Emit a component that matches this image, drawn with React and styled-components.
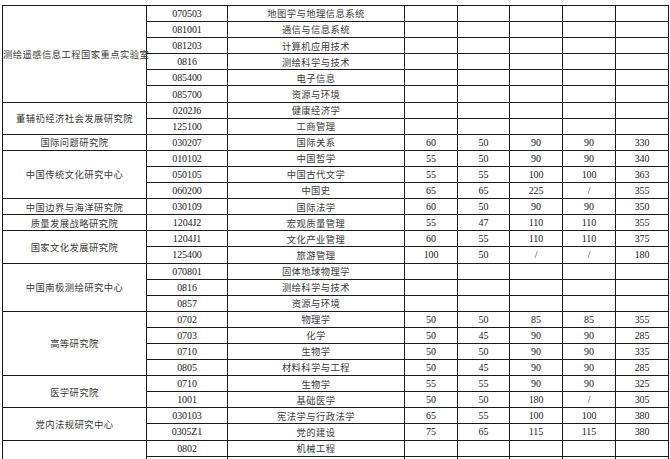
import React from "react";
import styled, { createGlobalStyle } from "styled-components";

const GlobalStyle = createGlobalStyle`
  html, body {
    margin: 0;
    padding: 0;
    overflow: hidden;
    background: #fff;
  }
`;

const Sheet = styled.table`
  margin: 5px 0 0 2px;
  width: 666px;
  border-collapse: collapse;
  table-layout: fixed;
  font-family: "Liberation Serif", "Noto Sans CJK SC", serif;
  font-size: 9.5px;
  color: #333;
`;

const Row = styled.tr`
  height: 16.1px;
`;

const Cell = styled.td`
  border: 1px solid #1a1a1a;
  padding: 1px 0 0;
  text-align: center;
  vertical-align: middle;
  white-space: nowrap;
  line-height: 1;
  font-size: ${(p) => (p.$cjk ? "9.3px" : "10px")};
  letter-spacing: ${(p) => (p.$cjk ? "0.45px" : "-0.1px")};
  font-family: ${(p) =>
    p.$cjk
      ? '"Noto Sans CJK SC", "Liberation Serif", sans-serif'
      : '"Liberation Serif", "Noto Sans CJK SC", serif'};
  color: ${(p) => (p.$cjk ? "#3a3a3a" : "#222")};
`;

const widths = [144, 81, 177, 53, 52, 53, 53, 53];

const groups = [
  {
    name: "测绘遥感信息工程国家重点实验室",
    rows: [
      ["070503", "地图学与地理信息系统"],
      ["081001", "通信与信息系统"],
      ["081203", "计算机应用技术"],
      ["0816", "测绘科学与技术"],
      ["085400", "电子信息"],
      ["085700", "资源与环境"],
    ],
  },
  {
    name: "董辅礽经济社会发展研究院",
    rows: [
      ["0202J6", "健康经济学"],
      ["125100", "工商管理"],
    ],
  },
  {
    name: "国际问题研究院",
    rows: [["030207", "国际关系", 60, 50, 90, 90, 330]],
  },
  {
    name: "中国传统文化研究中心",
    rows: [
      ["010102", "中国哲学", 55, 50, 90, 90, 340],
      ["050105", "中国古代文学", 55, 55, 100, 100, 363],
      ["060200", "中国史", 65, 65, 225, "/", 355],
    ],
  },
  {
    name: "中国边界与海洋研究院",
    rows: [["030109", "国际法学", 60, 50, 90, 90, 350]],
  },
  {
    name: "质量发展战略研究院",
    rows: [["1204J2", "宏观质量管理", 55, 47, 110, 110, 355]],
  },
  {
    name: "国家文化发展研究院",
    rows: [
      ["1204J1", "文化产业管理", 60, 55, 110, 110, 375],
      ["125400", "旅游管理", 100, 50, "/", "/", 180],
    ],
  },
  {
    name: "中国南极测绘研究中心",
    rows: [
      ["070801", "固体地球物理学"],
      ["0816", "测绘科学与技术"],
      ["0857", "资源与环境"],
    ],
  },
  {
    name: "高等研究院",
    rows: [
      ["0702", "物理学", 50, 50, 85, 85, 355],
      ["0703", "化学", 50, 45, 90, 90, 285],
      ["0710", "生物学", 50, 50, 90, 90, 335],
      ["0805", "材料科学与工程", 50, 45, 90, 90, 285],
    ],
  },
  {
    name: "医学研究院",
    rows: [
      ["0710", "生物学", 55, 55, 90, 90, 325],
      ["1001", "基础医学", 50, 50, 180, "/", 305],
    ],
  },
  {
    name: "党内法规研究中心",
    rows: [
      ["030103", "宪法学与行政法学", 65, 55, 100, 100, 380],
      ["0305Z1", "党的建设", 75, 65, 115, 115, 380],
    ],
  },
  {
    name: "",
    rows: [
      ["0802", "机械工程"],
      ["", ""],
      ["", ""],
    ],
  },
];

const GroupRows = ({ group }) =>
  group.rows.map(([code, major, ...scores], i) => {
    const cells = scores.length ? scores : ["", "", "", "", ""];
    return (
      <Row key={i}>
        {i === 0 && (
          <Cell $cjk rowSpan={group.rows.length}>
            {group.name}
          </Cell>
        )}
        <Cell>{code}</Cell>
        <Cell $cjk>{major}</Cell>
        {cells.map((v, j) => (
          <Cell key={j}>{v}</Cell>
        ))}
      </Row>
    );
  });

export default function App() {
  return (
    <>
      <GlobalStyle />
      <Sheet>
        <colgroup>
          {widths.map((w, i) => (
            <col key={i} style={{ width: w }} />
          ))}
        </colgroup>
        <tbody>
          {groups.map((g, i) => (
            <GroupRows key={i} group={g} />
          ))}
        </tbody>
      </Sheet>
    </>
  );
}
